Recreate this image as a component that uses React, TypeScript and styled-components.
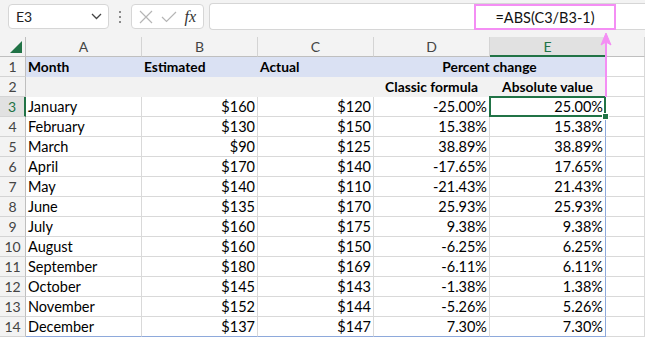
import styled, { createGlobalStyle } from "styled-components"

const GlobalStyle = createGlobalStyle`
  html, body {
    margin: 0;
    padding: 0;
    background: #ffffff;
  }
  body {
    font-family: "Lato", "Liberation Sans", sans-serif;
  }
`

type Row = {
  month: string
  estimated: string
  actual: string
  classic: string
  absolute: string
}

const rows: Row[] = [
  { month: "January", estimated: "$160", actual: "$120", classic: "-25.00%", absolute: "25.00%" },
  { month: "February", estimated: "$130", actual: "$150", classic: "15.38%", absolute: "15.38%" },
  { month: "March", estimated: "$90", actual: "$125", classic: "38.89%", absolute: "38.89%" },
  { month: "April", estimated: "$170", actual: "$140", classic: "-17.65%", absolute: "17.65%" },
  { month: "May", estimated: "$140", actual: "$110", classic: "-21.43%", absolute: "21.43%" },
  { month: "June", estimated: "$135", actual: "$170", classic: "25.93%", absolute: "25.93%" },
  { month: "July", estimated: "$160", actual: "$175", classic: "9.38%", absolute: "9.38%" },
  { month: "August", estimated: "$160", actual: "$150", classic: "-6.25%", absolute: "6.25%" },
  { month: "September", estimated: "$180", actual: "$169", classic: "-6.11%", absolute: "6.11%" },
  { month: "October", estimated: "$145", actual: "$143", classic: "-1.38%", absolute: "1.38%" },
  { month: "November", estimated: "$152", actual: "$144", classic: "-5.26%", absolute: "5.26%" },
  { month: "December", estimated: "$137", actual: "$147", classic: "7.30%", absolute: "7.30%" },
]

const Page = styled.div`
  position: relative;
  width: 645px;
  height: 337px;
  overflow: hidden;
  background: #ffffff;
`

const Toolbar = styled.div`
  height: 37px;
  background: #f3f3f3;
  display: flex;
  align-items: center;
  padding-left: 8px;
  box-sizing: border-box;
  padding-bottom: 4px;
`

const NameBox = styled.div`
  width: 101px;
  height: 25px;
  box-sizing: border-box;
  background: #fff;
  border: 1px solid #d6d6d6;
  border-radius: 4px;
  display: flex;
  align-items: center;
  justify-content: space-between;
  padding: 0 6px 0 7px;
  font-size: 14px;
  color: #222;
`

const Dots = styled.div`
  width: 22px;
  display: flex;
  flex-direction: column;
  align-items: center;
  gap: 3px;
  span {
    width: 2px;
    height: 2px;
    background: #8a8a8a;
  }
`

const ButtonGroup = styled.div`
  width: 73px;
  height: 25px;
  box-sizing: border-box;
  background: #fff;
  border: 1px solid #d6d6d6;
  border-radius: 4px;
  display: flex;
  align-items: center;
  justify-content: space-around;
  padding: 0 3px;
`

const Fx = styled.span`
  font-family: "Liberation Serif", serif;
  font-style: italic;
  font-size: 16px;
  color: #333;
`

const FormulaBar = styled.div`
  flex: 1;
  margin-left: 5px;
  height: 25px;
  background: #fff;
  border: 1px solid #d6d6d6;
  border-right: none;
  border-radius: 4px 0 0 4px;
`

const Grid = styled.div`
  display: grid;
  grid-template-columns: 26px repeat(5, 116px) 1fr;
  grid-auto-rows: 20px;
  font-size: 14.5px;
  color: #000;
`

const ColHead = styled.div<{ $active?: boolean }>`
  background: ${(p) => (p.$active ? "#e1e1e1" : "#f3f3f3")};
  border-right: 1px solid #d4d4d4;
  border-bottom: ${(p) => (p.$active ? "2px solid #217346" : "1px solid #bfbfbf")};
  color: ${(p) => (p.$active ? "#217346" : "#444")};
  display: flex;
  align-items: center;
  justify-content: center;
  font-size: 14px;
`

const Corner = styled.div`
  background: #f3f3f3;
  border-right: 1px solid #bfbfbf;
  border-bottom: 1px solid #bfbfbf;
  position: relative;
  &::after {
    content: "";
    position: absolute;
    right: 3px;
    bottom: 3px;
    border-style: solid;
    border-width: 0 0 12px 12px;
    border-color: transparent transparent #217346 transparent;
  }
`

const RowHead = styled.div<{ $active?: boolean }>`
  background: ${(p) => (p.$active ? "#e1e1e1" : "#f3f3f3")};
  border-right: ${(p) => (p.$active ? "2px solid #217346" : "1px solid #bfbfbf")};
  border-bottom: 1px solid #d4d4d4;
  color: ${(p) => (p.$active ? "#217346" : "#444")};
  display: flex;
  align-items: center;
  justify-content: center;
  font-size: 14px;
`

const Cell = styled.div<{ $align?: "left" | "right" | "center"; $bg?: string; $bold?: boolean; $grid?: boolean; $bottom?: string }>`
  background: ${(p) => p.$bg || "#fff"};
  border-right: 1px solid ${(p) => (p.$grid === false ? p.$bg : "#d9d9d9")};
  border-bottom: 1px solid ${(p) => p.$bottom || (p.$grid === false ? p.$bg : "#d9d9d9")};
  display: flex;
  align-items: center;
  justify-content: ${(p) => (p.$align === "right" ? "flex-end" : p.$align === "center" ? "center" : "flex-start")};
  padding: 0 2px 0 2px;
  font-weight: ${(p) => (p.$bold ? 700 : 400)};
  font-size: ${(p) => (p.$bold ? "13.8px" : "14.5px")};
  white-space: nowrap;
`

const SpanCell = styled(Cell)<{ $span: number }>`
  grid-column: span ${(p) => p.$span};
`

const TableEdge = styled(Cell)`
  border-right: 1px solid #8ea9db;
`

const Selected = styled.div`
  position: absolute;
  left: 489px;
  top: 96px;
  width: 117px;
  height: 21px;
  box-sizing: border-box;
  border: 2px solid #217346;
  pointer-events: none;
  &::after {
    content: "";
    position: absolute;
    right: -5px;
    bottom: -5px;
    width: 5px;
    height: 5px;
    background: #217346;
    border: 1px solid #fff;
  }
`

const Callout = styled.div`
  position: absolute;
  left: 474px;
  top: 4px;
  width: 142px;
  height: 26px;
  box-sizing: border-box;
  border: 2px solid #f48ef4;
  background: #fff;
  display: flex;
  align-items: center;
  justify-content: center;
  font-size: 14.5px;
  color: #111;
`

const Arrow = styled.svg`
  position: absolute;
  left: 598px;
  top: 32px;
`

const Chevron = () => (
  <svg width="11" height="7" viewBox="0 0 11 7">
    <path d="M1 1 L5.5 5.5 L10 1" fill="none" stroke="#444" strokeWidth="1.3" />
  </svg>
)

const Cross = () => (
  <svg width="14" height="14" viewBox="0 0 14 14">
    <path d="M1 1 L13 13 M13 1 L1 13" stroke="#b5b5b5" strokeWidth="1.2" />
  </svg>
)

const Check = () => (
  <svg width="16" height="12" viewBox="0 0 16 12">
    <path d="M1 6 L5.5 10.5 L15 1" fill="none" stroke="#b5b5b5" strokeWidth="1.2" />
  </svg>
)

const BLUE = "#dae1f3"
const GRAY = "#f2f2f2"
const EDGE = "#8ea9db"

export default function App() {
  const letters = ["A", "B", "C", "D", "E"]
  return (
    <Page>
      <GlobalStyle />
      <Toolbar>
        <NameBox>
          <span>E3</span>
          <Chevron />
        </NameBox>
        <Dots>
          <span />
          <span />
          <span />
        </Dots>
        <ButtonGroup>
          <Cross />
          <Check />
          <Fx>fx</Fx>
        </ButtonGroup>
        <FormulaBar />
      </Toolbar>
      <Grid>
        <Corner />
        {letters.map((l) => (
          <ColHead key={l} $active={l === "E"}>
            {l}
          </ColHead>
        ))}
        <ColHead />

        <RowHead>1</RowHead>
        <Cell $bg={BLUE} $bold $grid={false}>Month</Cell>
        <Cell $bg={BLUE} $bold $grid={false}>Estimated</Cell>
        <Cell $bg={BLUE} $bold $grid={false}>Actual</Cell>
        <SpanCell $span={2} $bg={BLUE} $bold $grid={false} $align="center">
          Percent change
        </SpanCell>
        <Cell />

        <RowHead>2</RowHead>
        <Cell $bg={GRAY} $grid={false} />
        <Cell $bg={GRAY} $grid={false} />
        <Cell $bg={GRAY} $grid={false} />
        <Cell $bg={GRAY} $bold $grid={false} $align="center">Classic formula</Cell>
        <Cell $bg={GRAY} $bold $grid={false} $align="center">Absolute value</Cell>
        <Cell />

        {rows.map((r, i) => {
          const bottom = i === rows.length - 1 ? EDGE : undefined
          return [
            <RowHead key={`h${i}`} $active={i === 0}>{i + 3}</RowHead>,
            <Cell key={`a${i}`} $bottom={bottom}>{r.month}</Cell>,
            <Cell key={`b${i}`} $align="right" $bottom={bottom}>{r.estimated}</Cell>,
            <Cell key={`c${i}`} $align="right" $bottom={bottom}>{r.actual}</Cell>,
            <Cell key={`d${i}`} $align="right" $bottom={bottom}>{r.classic}</Cell>,
            <TableEdge key={`e${i}`} $align="right" $bottom={bottom}>{r.absolute}</TableEdge>,
            <Cell key={`f${i}`} />,
          ]
        })}
      </Grid>
      <Selected />
      <Callout>=ABS(C3/B3-1)</Callout>
      <Arrow width="16" height="65" viewBox="0 0 16 65">
        <path d="M8 3 L8 65" stroke="#f48ef4" strokeWidth="2" />
        <path d="M8 1 L3 13 L8 10 L13 13 Z" fill="#f48ef4" stroke="#f48ef4" strokeWidth="1" strokeLinejoin="round" />
      </Arrow>
    </Page>
  )
}
